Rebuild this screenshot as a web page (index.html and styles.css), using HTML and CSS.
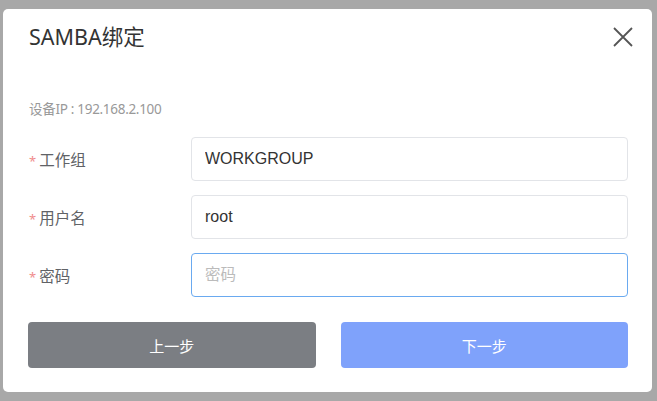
FILE: index.html
```html
<!DOCTYPE html>
<html lang="zh-CN">
<head>
<meta charset="utf-8">
<title>SAMBA绑定</title>
<link rel="stylesheet" href="styles.css">
</head>
<body>
<div class="modal">
  <div class="modal-header">
    <h2 class="modal-title">SAMBA绑定</h2>
    <button class="close-btn" aria-label="关闭">
      <svg width="22" height="22" viewBox="0 0 22 22"><path d="M2 2 L20 20 M20 2 L2 20" stroke="#555" stroke-width="1.8" fill="none"/></svg>
    </button>
  </div>
  <div class="device-ip">设备IP : 192.168.2.100</div>
  <form class="form">
    <div class="form-row">
      <label class="form-label"><span class="req">*</span>工作组</label>
      <input class="form-input" type="text" value="WORKGROUP">
    </div>
    <div class="form-row">
      <label class="form-label"><span class="req">*</span>用户名</label>
      <input class="form-input" type="text" value="root">
    </div>
    <div class="form-row">
      <label class="form-label"><span class="req">*</span>密码</label>
      <input class="form-input focused" type="password" placeholder="密码">
    </div>
  </form>
  <div class="actions">
    <button class="btn btn-prev">上一步</button>
    <button class="btn btn-next">下一步</button>
  </div>
</div>
</body>
</html>
```
FILE: styles.css
```css
html, body {
  margin: 0;
  padding: 0;
}
body {
  background: #a8a8a8;
  width: 657px;
  height: 401px;
  overflow: hidden;
  font-family: "Noto Sans", "Noto Sans CJK SC", sans-serif;
}
.modal {
  box-sizing: border-box;
  margin: 9px 0 0 3px;
  width: 649px;
  height: 383px;
  background: #fff;
  border-radius: 5px;
  padding: 0 24px 24px 25px;
  display: flex;
  flex-direction: column;
}
.modal-header {
  display: flex;
  align-items: center;
  justify-content: space-between;
  height: 56px;
  padding-top: 1px;
  box-sizing: border-box;
}
.modal-title {
  margin: 0 0 0 1px;
  font-size: 21.5px;
  font-weight: 400;
  color: #333;
  line-height: 28px;
}
.close-btn {
  border: 0;
  background: none;
  padding: 0;
  margin-right: -6px;
  width: 22px;
  height: 22px;
  cursor: pointer;
}
.close-btn svg { display: block; }
.device-ip {
  margin: 36px 0 0 1px;
  font-size: 13.5px;
  line-height: 18px;
  color: #999;
  letter-spacing: -0.3px;
}
.form {
  margin-top: 19px;
  display: flex;
  flex-direction: column;
  gap: 14px;
}
.form-row {
  display: flex;
  align-items: center;
  height: 44px;
}
.form-label {
  width: 162px;
  font-size: 15.5px;
  color: #606266;
  padding-left: 1px;
}
.req {
  color: #f08c8c;
  margin-right: 3px;
  font-size: 13px;
}
.form-input {
  flex: 1;
  box-sizing: border-box;
  height: 44px;
  border: 1px solid #e2e4e8;
  border-radius: 4px;
  padding: 0 13px;
  font-family: "Liberation Sans", "Noto Sans CJK SC", sans-serif;
  font-size: 16px;
  color: #333;
  outline: none;
  background: #fff;
}
.form-input.focused {
  border-color: #6aaaf0;
}
.form-input::placeholder {
  color: #bbb;
  font-family: "Noto Sans CJK SC", sans-serif;
  font-size: 15.5px;
}
.actions {
  margin-top: 25px;
  display: flex;
  gap: 25px;
}
.btn {
  flex: 1;
  height: 46px;
  border: 0;
  border-radius: 4px;
  color: #fff;
  font-size: 15px;
  font-family: "Noto Sans CJK SC", sans-serif;
  cursor: pointer;
}
.btn-prev { background: #7b7e83; }
.btn-next { background: #7fa2fb; }
```
